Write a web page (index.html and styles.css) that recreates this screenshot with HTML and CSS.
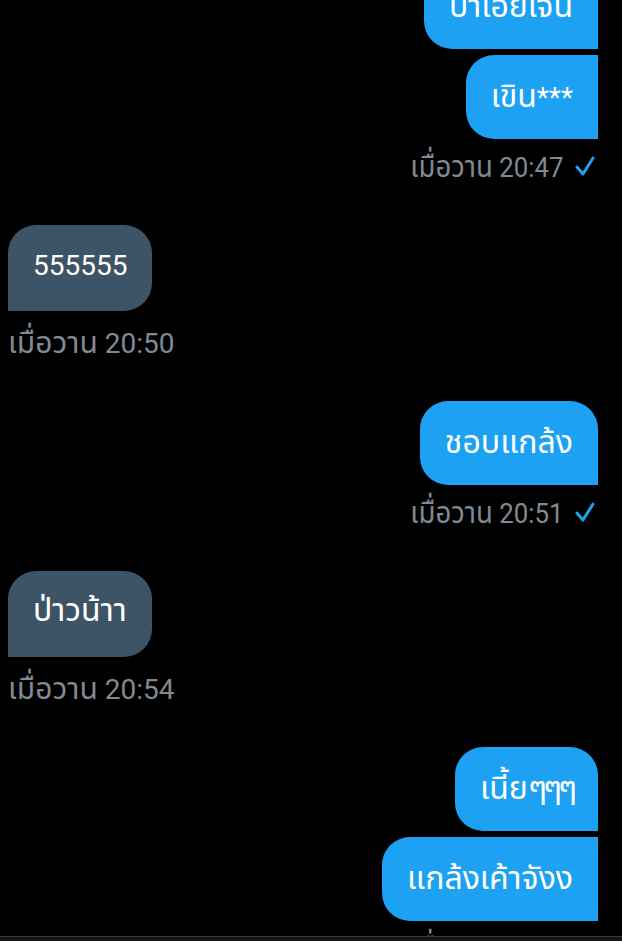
FILE: index.html
```html
<!DOCTYPE html>
<html lang="th">
<head>
  <meta charset="UTF-8" />
  <meta name="viewport" content="width=device-width, initial-scale=1.0"/>
  <title>แชท</title>
  <link rel="stylesheet" href="styles.css">
</head>
<body>
  <div class="screen">
    <div class="chat">
      <div class="group sent">
        <div class="bubble first"><span class="th">บ้าเอ้ยเจิน</span></div>
        <div class="bubble"><span class="th">เขิน</span>***</div>
        <div class="time"><span class="stamp"><span class="th">เมื่อวาน</span> 20:47</span>
          <svg class="tick" viewBox="0 0 20 22"><polyline points="2,12 8,19 18,3" /></svg>
        </div>
      </div>

      <div class="group received">
        <div class="bubble">555555</div>
        <div class="time"><span class="stamp"><span class="th">เมื่อวาน</span> 20:50</span></div>
      </div>

      <div class="group sent">
        <div class="bubble first"><span class="th">ชอบแกล้ง</span></div>
        <div class="time"><span class="stamp"><span class="th">เมื่อวาน</span> 20:51</span>
          <svg class="tick" viewBox="0 0 20 22"><polyline points="2,12 8,19 18,3" /></svg>
        </div>
      </div>

      <div class="group received">
        <div class="bubble"><span class="th">ป่าวน้าา</span></div>
        <div class="time"><span class="stamp"><span class="th">เมื่อวาน</span> 20:54</span></div>
      </div>

      <div class="group sent">
        <div class="bubble first"><span class="th">เนี้ย<span class="rep">ๆๆๆ</span></span></div>
        <div class="bubble"><span class="th">แกล้งเค้าจังง</span></div>
        <div class="time"><span class="stamp"><span class="th">เมื่อวาน</span> 20:55</span>
          <svg class="tick" viewBox="0 0 20 22"><polyline points="2,12 8,19 18,3" /></svg>
        </div>
      </div>
    </div>
    <div class="composer"></div>
  </div>
</body>
</html>
```

FILE: styles.css
```css
body {
  margin: 0;
  background: #000;
  font-family: Roboto, "Noto Sans Thai", "Noto Sans", sans-serif;
  color: #fff;
}

.screen {
  height: 941px;
  display: flex;
  flex-direction: column;
  overflow: hidden;
}

.chat {
  height: 936px;
  overflow: hidden;
  flex-shrink: 0;
}

.group {
  display: flex;
  flex-direction: column;
  gap: 6px;
  margin-bottom: 42px;
}

.group:first-child {
  margin-top: -35px;
}

.bubble {
  font-size: 28px;
  line-height: 44px;
  padding: 21px 25px 19px;
  border-radius: 28px;
}

/* thai glyphs of the fallback font run small next to Roboto */
.bubble .th {
  font-size: 32px;
  line-height: 30px;
}

.bubble .rep {
  letter-spacing: -4px;
}

.sent {
  align-items: flex-end;
  padding-right: 24px;
}

.sent .bubble {
  background: #1da1f2;
  border-top-right-radius: 0;
  border-bottom-right-radius: 0;
}

.sent .bubble.first {
  border-top-right-radius: 28px;
}

.received {
  align-items: flex-start;
  padding-left: 8px;
}

.received .bubble {
  background: #3d5466;
  padding: 19px 25px 23px;
  border-bottom-left-radius: 0;
}

.time {
  display: flex;
  align-items: center;
  font-size: 28px;
  line-height: 30px;
  color: #818a93;
}

.time .th {
  font-size: 30px;
  line-height: 20px;
}

.sent .time {
  margin-top: 8px;
  margin-right: 3px;
}

.sent .stamp {
  transform: scaleX(0.92);
  transform-origin: right center;
}

.received .time {
  margin-top: 12px;
}

.tick {
  width: 20px;
  height: 22px;
  margin-left: 12px;
  margin-bottom: 4px;
}

.tick polyline {
  fill: none;
  stroke: #1da1f2;
  stroke-width: 3;
  stroke-linecap: round;
  stroke-linejoin: round;
}

.composer {
  flex: 1;
  background: #161616;
  border-top: 1px solid #3a3a3a;
}
```
